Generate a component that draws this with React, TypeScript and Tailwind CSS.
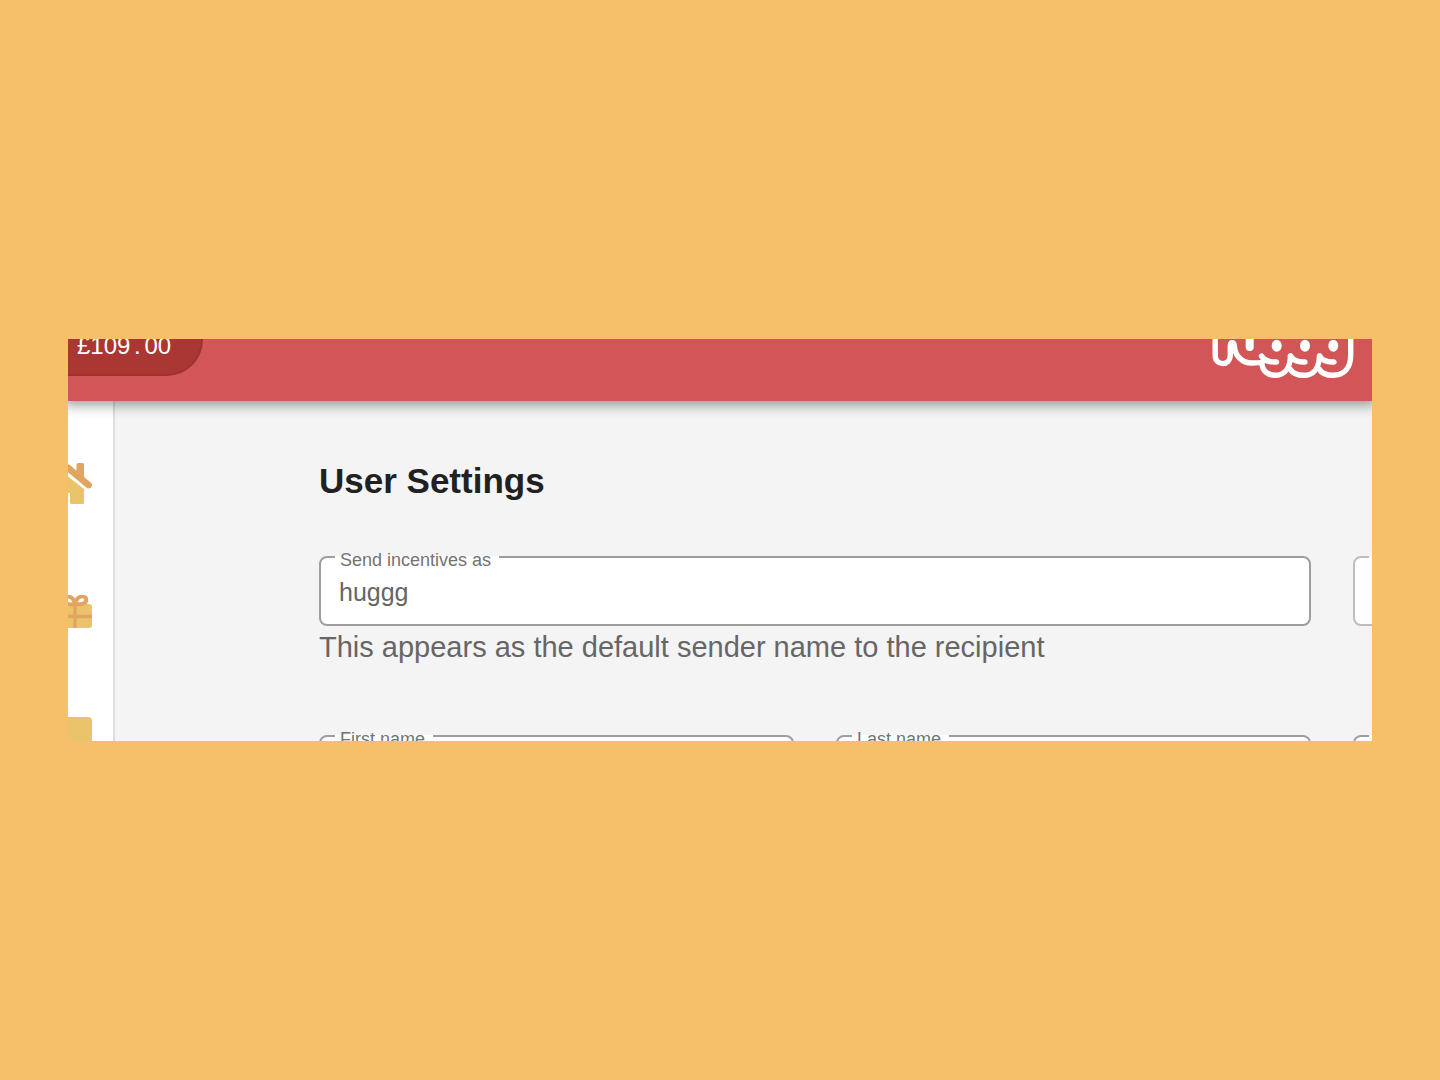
import React from 'react';

interface FieldProps {
    id: string;
    label?: string;
    value?: string;
    faded?: boolean;
}

const Field: React.FC<FieldProps> = ({ id, label = '', value = '', faded = false }) => (
    <div className={`relative h-[70px] rounded-lg border-2 bg-white ${faded ? 'border-[#bdbdbd]' : 'border-[#9e9e9e]'}`}>
        <label
            htmlFor={id}
            className="absolute -top-0.5 left-3.5 h-2 min-w-20 whitespace-nowrap bg-white pl-[5px] pr-2 text-[18px] leading-2 text-[#737373]"
        >
            {label}
        </label>
        <input
            id={id}
            type="text"
            defaultValue={value}
            className="h-full w-full bg-transparent px-[18px] pt-0.5 text-[25px] text-[#666666] outline-none"
        />
    </div>
);

const HomeIcon: React.FC = () => (
    <svg viewBox="0 0 48 44" className="h-11 w-12" aria-hidden="true">
        <path d="M24 13.500 40 26V39.500Q40 41 38.500 41H27.500Q26 41 26 39.500V30H14V41H9.500Q8 41 8 39.500V26Z" fill="#e9c46a" />
        <path d="M32.500 14V1.500Q32.500 0 34 0H38.500Q40 0 40 1.500V20Z" fill="#e2a561" />
        <path d="M3.500 22 24 4.800 44.500 22" fill="none" stroke="#e2a561" strokeWidth="6.800" strokeLinecap="round" strokeLinejoin="round" />
    </svg>
);

const GiftIcon: React.FC = () => (
    <svg viewBox="0 0 48 34" className="h-[34px] w-12" aria-hidden="true">
        <rect x="14" y="9" width="34" height="24" rx="3" fill="#e9c46a" />
        <path d="M14 21.500H48M31 9V33" stroke="#e2a561" strokeWidth="3.400" />
        <path
            d="M31 9.500C32 1 40 -0.500 42 3.500C43.500 9 37 9.500 31 9.500C30 1 22 -0.500 20 3.500C18.500 9 25 9.500 31 9.500Z"
            fill="none"
            stroke="#e2a561"
            strokeWidth="4"
            strokeLinejoin="round"
        />
    </svg>
);

const CardIcon: React.FC = () => (
    <svg viewBox="0 0 48 34" className="h-[34px] w-12" aria-hidden="true">
        <rect width="48" height="34" rx="4" fill="#e9c46a" />
    </svg>
);

const Logo: React.FC = () => (
    <svg viewBox="0 0 144 40" className="h-10 w-36" aria-hidden="true">
        <g fill="none" stroke="#fff" strokeWidth="5.400" strokeLinecap="round" strokeLinejoin="round">
            <path d="M5.200 -4V16C5 27.500 20 27.500 20.300 16V7C20.500 2.500 24 2.500 24.300 7C25 17 32 24 42 24C46 24 49 24 52 23" />
            {/* tails */}
            <path d="M51.500 17C54 21 58 23.500 66.500 23" />
            <path d="M80.500 17C83 21 87 23.500 95 23" />
            <path d="M109.500 17C112 21 116 23.500 124 23" />
            {/* bowls */}
            <path d="M52 24C52 32 58 36.300 65 36.300C74 36.300 80 30 80.500 17" />
            <path d="M80 30C83 35 88 36.300 94 36.300C103 36.300 109 30 109.500 17" />
            <path d="M109 30C112 35 117 36.300 123 36.300C134 36.300 140.700 29 140.700 16V-4" />
        </g>
        <g fill="#fff">
            <rect x="35.700" y="-8" width="8" height="20" rx="4" />
            <ellipse cx="66.700" cy="6.700" rx="5" ry="6" />
            <ellipse cx="95" cy="6.700" rx="5" ry="6" />
            <ellipse cx="123.300" cy="6.700" rx="5" ry="6" />
        </g>
    </svg>
);

const App: React.FC = () => {
    return (
        <div className="flex min-h-screen items-center bg-[#f6c06b] px-[68px] font-['Liberation_Sans',Arial,sans-serif]">
            <div className="flex aspect-[1304/402] w-full flex-col overflow-hidden bg-[#f4f4f4]">
                <header className="relative z-10 flex h-[62px] shrink-0 items-start justify-between bg-[#d25558] pr-[18px] shadow-[0_0_12px_4px_rgba(0,0,0,0.4)]">
                    <div className="-mt-9 flex h-[73px] w-[135px] items-end rounded-r-full border-2 border-l-0 border-[#9c3330] bg-[#aa3734] pb-4 pl-[9px] text-2xl leading-6 text-white">
                        <span>£109<span className="inline-block w-3.5 text-center">.</span>00</span>
                    </div>
                    <Logo />
                </header>

                <div className="flex min-h-0 flex-1">
                    <nav className="flex w-[47px] shrink-0 flex-col items-end gap-22 border-r-2 border-[#dddddd] bg-white pr-[21px] pt-[62px]">
                        <a href="#home" aria-label="Home" className="shrink-0"><HomeIcon /></a>
                        <a href="#gifts" aria-label="Gifts" className="shrink-0"><GiftIcon /></a>
                        <a href="#cards" aria-label="Cards" className="shrink-0"><CardIcon /></a>
                    </nav>

                    <main className="min-w-0 flex-1 pl-[204px] pt-[60px]">
                        <h1 className="text-[35px] font-bold leading-10 text-[#212121]">User Settings</h1>

                        <form className="mt-[55px] grid grid-cols-[475px_475px_475px] gap-x-[42px] gap-y-[67px]">
                            <div className="col-span-2">
                                <Field id="sender" label="Send incentives as" value="huggg" />
                                <p className="whitespace-nowrap text-[29px] leading-[42px] text-[#666666]">
                                    This appears as the default sender name to the recipient
                                </p>
                            </div>
                            <Field id="company" faded />
                            <Field id="first-name" label="First name" />
                            <Field id="last-name" label="Last name" />
                            <Field id="email" />
                        </form>
                    </main>
                </div>
            </div>
        </div>
    );
};

export default App;
